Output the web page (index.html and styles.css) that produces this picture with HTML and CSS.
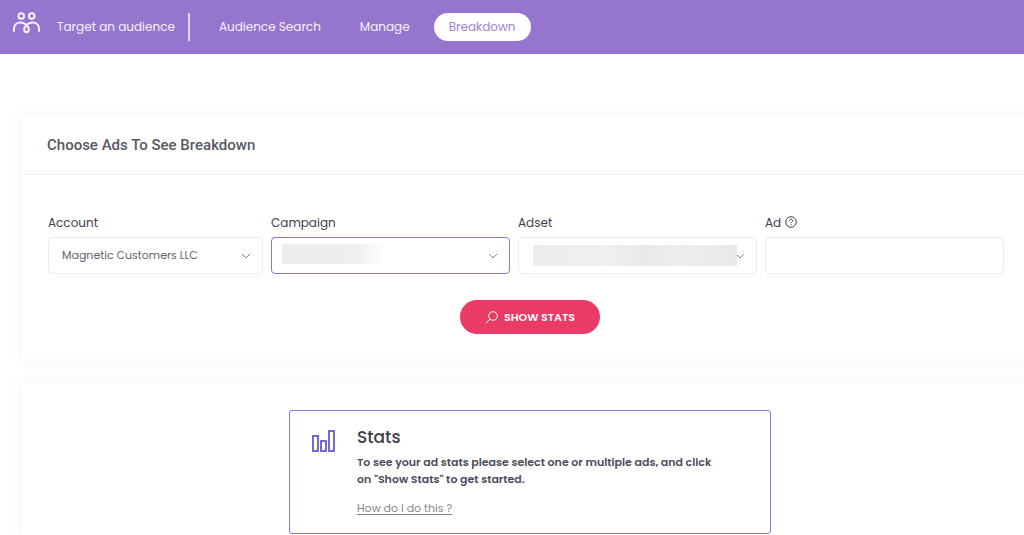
FILE: index.html
```html
<!DOCTYPE html>
<html lang="en">
<head>
<meta charset="utf-8">
<title>Breakdown</title>
<link rel="stylesheet" href="styles.css">
</head>
<body>
<header class="topbar">
  <svg class="brand-icon" viewBox="0 0 28 22" aria-hidden="true">
    <circle cx="9.300" cy="4" r="2.800"/><circle cx="19.700" cy="4" r="2.800"/>
    <path d="M2 19v-2c0-4 2.800-6.500 6.200-6.500 4.500 0 8.600 3.500 8.600 7 0 3.600-4.600 3.600-4.600 0 0-3.500 4.100-7 8.600-7 3.400 0 6.200 2.500 6.200 6.500v2"/>
  </svg>
  <span class="brand">Target an audience</span>
  <nav class="nav">
    <a class="nav-link" href="#search">Audience Search</a>
    <a class="nav-link" href="#manage">Manage</a>
    <a class="nav-link active" href="#breakdown">Breakdown</a>
  </nav>
</header>
<main class="page">
  <section class="card">
    <h1 class="card-title">Choose Ads To See Breakdown</h1>
    <form class="card-body">
      <div class="fields">
        <div class="field">
          <label class="label" for="account">Account</label>
          <div class="control">
            <select class="input" id="account"><option>Magnetic Customers LLC</option></select>
            <svg class="chevron" viewBox="0 0 10 6" aria-hidden="true"><path d="M1 1l4 4 4-4"/></svg>
          </div>
        </div>
        <div class="field">
          <label class="label" for="campaign">Campaign</label>
          <div class="control">
            <select class="input selected" id="campaign"><option></option></select>
            <span class="mask mask-short"></span>
            <svg class="chevron" viewBox="0 0 10 6" aria-hidden="true"><path d="M1 1l4 4 4-4"/></svg>
          </div>
        </div>
        <div class="field">
          <label class="label" for="adset">Adset</label>
          <div class="control">
            <select class="input" id="adset"><option></option></select>
            <svg class="chevron" viewBox="0 0 10 6" aria-hidden="true"><path d="M1 1l4 4 4-4"/></svg>
            <span class="mask mask-long"></span>
          </div>
        </div>
        <div class="field">
          <label class="label" for="ad">Ad
            <svg class="help" viewBox="0 0 12 12" aria-hidden="true"><circle cx="6" cy="6" r="5.300"/><path d="M4.400 4.800c0-2.200 3.300-2.100 3.300-.1 0 1.100-1.600 1.100-1.600 2.300M6.100 8.200v1"/></svg>
          </label>
          <div class="control"><input class="input" id="ad" type="text"></div>
        </div>
      </div>
      <button class="show" type="button">
        <svg class="search" viewBox="0 0 13 13" aria-hidden="true"><circle cx="8" cy="5" r="4.300"/><path d="M5 8.200L.8 12.200"/></svg>
        SHOW STATS
      </button>
    </form>
  </section>
  <section class="card results">
    <div class="notice">
      <svg class="bars" viewBox="0 0 24 22" aria-hidden="true"><path d="M1 6h5v15H1zM9 11h5v10H9zM17 1h5v20h-5z"/></svg>
      <div>
        <h2 class="notice-title">Stats</h2>
        <p class="notice-text">To see your ad stats please select one or multiple ads, and click on "Show Stats" to get started.</p>
        <a class="notice-link" href="#help">How do I do this ?</a>
      </div>
    </div>
  </section>
</main>
</body>
</html>
```

FILE: styles.css
```css
* { box-sizing: border-box; }
body {
  margin: 0;
  min-height: 100vh;
  display: flex;
  flex-direction: column;
  background: #fff;
  color: #575962;
  font-family: Poppins, Inter, sans-serif;
  font-size: 12px;
}
svg { fill: none; stroke: currentColor; flex: none; }
.topbar {
  display: flex;
  align-items: center;
  min-height: 54px;
  padding: 0 12px;
  background: #9675ce;
  color: #f6f1fd;
}
.brand-icon { width: 28px; height: 22px; margin: 0 17px 8px 0; stroke-width: 2; stroke-linecap: round; }
.brand { padding-right: 13px; border-right: 2px solid #e0d5f3; line-height: 28px; white-space: nowrap; }
.nav { display: flex; margin-left: 14px; gap: 9px; }
.nav-link {
  padding: 0 15px;
  border-radius: 14px;
  color: #f6f1fd;
  line-height: 28px;
  text-decoration: none;
  white-space: nowrap;
}
.nav-link.active { background: #fff; color: #a184d6; }
.page {
  flex: 1;
  display: flex;
  flex-direction: column;
  gap: 25px;
  padding: 62px 0 0 22px;
  overflow: hidden;
}
.card { margin-right: -14px; background: #fff; box-shadow: 0 0 14px 2px rgba(70, 70, 90, 0.05); }
.card-title {
  margin: 0;
  padding: 1px 25px 0;
  border-bottom: 1px solid #f1f1f4;
  font: 500 15px/57px Roboto, sans-serif;
}
.card-body { padding: 38px 26px 25px; }
.fields { display: grid; grid-template-columns: 215fr 239fr 239fr 239fr; gap: 8px; padding-right: 8px; }
.label { display: flex; align-items: center; gap: 4px; height: 20px; margin-bottom: 4px; color: #3f414b; }
.help { width: 12px; height: 12px; margin-bottom: 3px; }
.control { position: relative; }
.input {
  display: block;
  appearance: none;
  width: 100%;
  height: 37px;
  padding: 0 30px 2px 13px;
  border: 1px solid #ebedf2;
  border-radius: 4px;
  background: #fff;
  color: #62646d;
  font: inherit;
  font-size: 11px;
}
.input.selected { border-color: #8878d8; }
.chevron { position: absolute; top: 16px; right: 12px; width: 10px; height: 6px; color: #8a8c94; pointer-events: none; }
.mask { position: absolute; pointer-events: none; }
.mask-short { top: 7px; left: 11px; width: 104px; height: 20px; background: linear-gradient(90deg, #ececee, #efeff1 70%, #fff); }
.mask-long { top: 8px; left: 15px; right: 20px; height: 21px; background: linear-gradient(90deg, #ededee, #f0f0f1 35%, #e9e9eb 55%, #eeeeef 70%, #e9e9eb); }
.show {
  display: flex;
  align-items: center;
  justify-content: center;
  gap: 6px;
  min-width: 140px;
  height: 34px;
  margin: 26px auto 0;
  padding: 0 20px;
  border: 0;
  border-radius: 17px;
  background: #e93b66;
  color: #fff;
  font: inherit;
  font-size: 11px;
  font-weight: 600;
}
.search { width: 13px; height: 13px; }
.results { flex: 1; padding: 26px 26px 0; }
.notice {
  display: flex;
  gap: 21px;
  max-width: 482px;
  margin: 0 auto;
  padding: 16px 42px 16px 22px;
  border: 1px solid #8878d8;
  border-radius: 3px;
}
.bars { width: 24px; height: 22px; margin-top: 3px; color: #7468d4; stroke-width: 2; }
.notice-title { margin: 0 0 7px; color: #3f4047; font-size: 17px; font-weight: 500; line-height: 20px; }
.notice-text { margin: 0 0 12px; color: #4b4c5c; font-size: 11px; font-weight: 600; line-height: 17px; }
.notice-link { display: block; color: #85858c; font-size: 11px; line-height: 17px; text-underline-offset: 2px; }
```
